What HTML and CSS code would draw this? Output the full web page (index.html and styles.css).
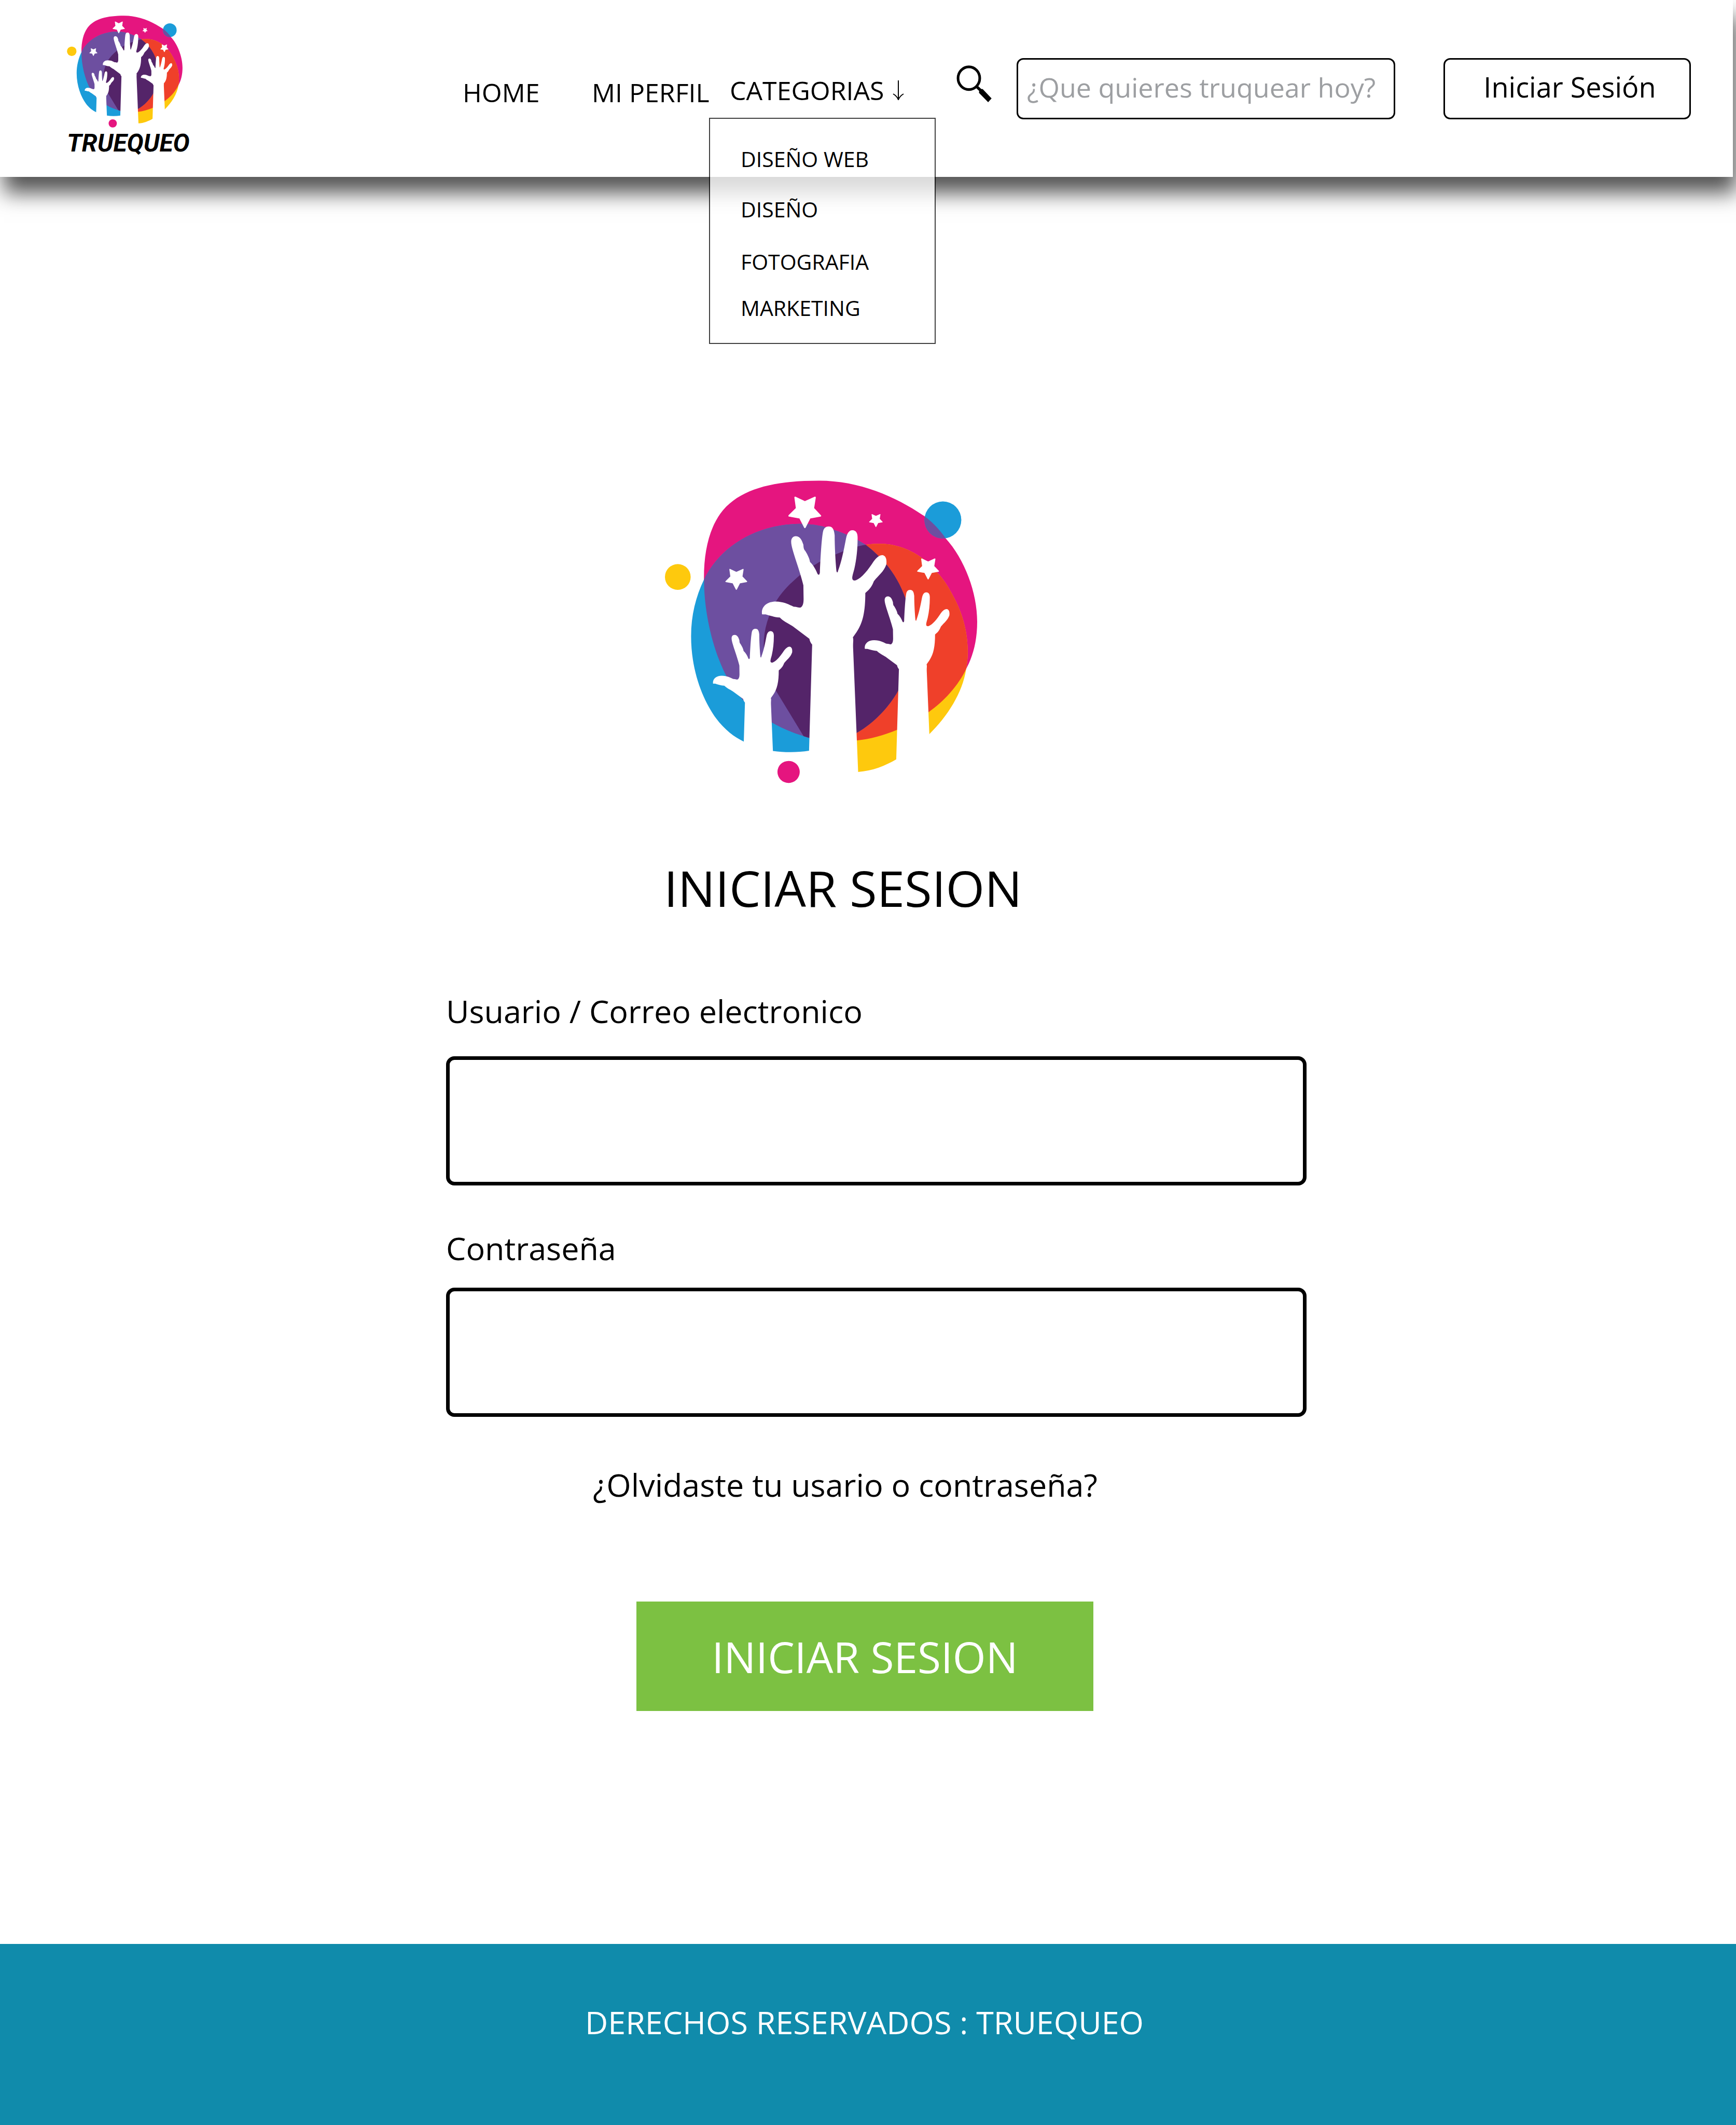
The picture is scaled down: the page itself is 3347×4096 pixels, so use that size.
FILE: index.html
```html
<!DOCTYPE html>
<html lang="es">
<head>
  <meta charset="utf-8">
  <meta name="viewport" content="width=device-width, initial-scale=1">
  <title>Truequeo - Iniciar sesion</title>
  <link rel="stylesheet" href="styles.css">
</head>
<body>
  <svg class="sprite" aria-hidden="true">
    <defs>
      <path id="blob-pink" d="M233 540C233 410 258 305 310 230C395 110 560 72 770 72C960 72 1130 150 1262 243C1300 272 1335 310 1360 348C1450 450 1508 610 1508 750C1508 840 1490 910 1460 970C1420 1060 1350 1135 1282 1184C1240 1220 1190 1248 1136 1269C1070 1297 1010 1314 946 1321C880 1330 790 1325 724 1308C665 1290 605 1268 550 1235C450 1180 385 1100 341 1018C280 900 233 720 233 540Z"/>
      <path id="blob-blue" d="M233 548C195 630 173 720 173 820C173 990 230 1130 290 1215C330 1270 375 1305 420 1327C460 1350 510 1366 554 1371C610 1379 670 1379 724 1370C800 1355 880 1325 946 1284C1030 1235 1100 1155 1140 1080C1180 1010 1200 900 1200 800C1200 740 1190 690 1174 640C1150 570 1120 520 1084 474C1060 445 1020 405 988 381C945 352 895 327 843 310C790 290 740 280 680 280C480 282 310 385 233 548Z"/>
      <path id="blob-yellow" d="M1060 376C1020 375 985 380 951 388C915 399 880 412 843 428C805 444 775 460 745 480C720 495 700 510 680 527C630 570 595 610 569 653C535 715 512 785 512 860C515 940 535 1020 568 1080L698 1300C760 1390 850 1470 952 1472C1020 1468 1080 1442 1130 1412C1190 1380 1240 1340 1285 1290C1370 1205 1440 1090 1456 980C1462 945 1464 920 1464 890C1463 780 1430 690 1395 625C1380 595 1355 550 1325 518C1300 485 1270 460 1245 440C1190 400 1120 376 1060 376Z"/>
      <path id="hand" d="M718 1560L738 860C730 850 727 843 725 832L655 778C640 765 605 750 587 730C560 728 540 720 525 716C518 713 510 716 504 714C499 680 525 653 568 653C610 654 630 668 652 678C665 677 676 684 684 682C695 676 698 660 698 640L697 575C690 545 675 495 662 455C650 415 640 385 640 365C640 350 648 339 662 339C684 340 691 362 697 380C698 400 700 402 706 410C718 430 726 448 728 463C745 480 755 500 762 518C766 527 772 527 774 514C776 460 781 360 788 320C791 302 800 292 815 292C832 292 840 304 843 335C843 390 847 460 851 505C853 516 857 516 859 505C875 460 885 410 896 350C901 325 910 310 926 310C944 311 951 325 950 350C950 400 945 450 935 495C930 515 925 530 925 540C925 550 932 554 942 551C970 540 1000 500 1025 460C1040 440 1052 430 1066 430C1082 433 1087 450 1084 475C1072 510 1050 525 1026 555C1016 580 1012 588 986 612C986 700 975 755 945 800L928 825C932 840 928 845 929 875L956 1560Z"/>
      <path id="star" d="M659 153L704 175L751 153L743 205L776 241L727 250L704 296L681 250L631 241L666 205Z"/>
      <clipPath id="in-pink"><use href="#blob-pink"/></clipPath>
      <clipPath id="in-blue"><use href="#blob-blue"/></clipPath>
    </defs>
    <symbol id="mark" viewBox="51 69 1457 1413">
      <g transform="scale(1 .9706)">
        <use href="#blob-pink" fill="#e5157f"/>
        <use href="#blob-yellow" fill="#fec90d"/>
        <use href="#blob-blue" fill="#1b9cd9"/>
        <g clip-path="url(#in-pink)">
          <use href="#blob-yellow" fill="#ef402a"/>
          <use href="#blob-blue" fill="#6d4fa0"/>
          <g clip-path="url(#in-blue)"><use href="#blob-yellow" fill="#542469"/></g>
        </g>
        <ellipse cx="1348" cy="261" rx="86" ry="89" fill="#1b9cd9"/>
        <g clip-path="url(#in-pink)"><ellipse cx="1348" cy="261" rx="86" ry="89" fill="#6d4fa0"/></g>
        <ellipse cx="111" cy="535" rx="60" ry="62" fill="#fec90d"/>
        <ellipse cx="628" cy="1472" rx="52" ry="53" fill="#e5157f"/>
        <g fill="#fff">
          <use href="#hand"/>
          <use href="#hand" transform="translate(641 401) scale(.68 .671)"/>
          <use href="#hand" transform="translate(-45 602) scale(.636 .624)"/>
        </g>
        <g fill="#fff" stroke="#fff" stroke-width="8" stroke-linejoin="round">
          <use href="#star"/>
          <use href="#star" transform="translate(-84 397) scale(.665)"/>
          <use href="#star" transform="translate(811 347) scale(.665)"/>
          <use href="#star" transform="translate(744 171) scale(.414)"/>
        </g>
      </g>
    </symbol>
  </svg>

  <header class="header">
    <a class="brand" href="#">
      <svg class="brand-mark" aria-hidden="true"><use href="#mark"/></svg>
      <span class="brand-name">TRUEQUEO</span>
    </a>
    <nav class="nav">
      <a class="nav-link" href="#">HOME</a>
      <a class="nav-link" href="#">MI PERFIL</a>
      <div class="nav-group">
        <button class="nav-toggle" type="button" aria-expanded="true">CATEGORIAS
          <svg class="arrow" viewBox="0 0 22 38" aria-hidden="true"><path d="M11 0V37M1 26Q8 30 11 37Q14 30 21 26"/></svg>
        </button>
        <ul class="menu">
          <li><a href="#">DISEÑO WEB</a></li>
          <li><a href="#">DISEÑO</a></li>
          <li><a href="#">FOTOGRAFIA</a></li>
          <li><a href="#">MARKETING</a></li>
        </ul>
      </div>
    </nav>
    <form class="search">
      <label for="buscar" aria-label="Buscar">
        <svg class="search-icon" viewBox="91 96 213 224" aria-hidden="true">
          <ellipse cx="166" cy="174" rx="66" ry="69" fill="none" stroke="#000" stroke-width="16"/>
          <path d="M209 233L221 221L242 240Q250 239 254 244L304 297L283 320L229 265Q226 259 229 252Z"/>
        </svg>
      </label>
      <input class="search-input" id="buscar" type="text" placeholder="¿Que quieres truquear hoy?">
    </form>
    <button class="login" type="button">Iniciar Sesión</button>
  </header>

  <main class="main">
    <form class="form">
      <svg class="form-mark" aria-hidden="true"><use href="#mark"/></svg>
      <h1 class="title">INICIAR SESION</h1>
      <label class="label label-user" for="usuario">Usuario / Correo electronico</label>
      <input class="field" id="usuario" type="text">
      <label class="label label-pass" for="clave">Contraseña</label>
      <input class="field" id="clave" type="password">
      <a class="forgot" href="#">¿Olvidaste tu usario o contraseña?</a>
      <button class="submit" type="submit">INICIAR SESION</button>
    </form>
  </main>

  <footer class="footer">DERECHOS RESERVADOS : TRUEQUEO</footer>
</body>
</html>
```
FILE: styles.css
```css
* {
  box-sizing: border-box;
}

body {
  margin: 0;
  min-height: 100vh;
  display: flex;
  flex-direction: column;
  overflow-x: hidden;
  background: #fff;
  color: #000;
  font-family: "Open Sans", "Noto Sans", sans-serif;
}

a {
  color: inherit;
  text-decoration: none;
}

button,
input {
  margin: 0;
  font-family: inherit;
  color: inherit;
}

.sprite {
  position: absolute;
  width: 0;
  height: 0;
}

/* Header */

.header {
  position: relative;
  z-index: 1;
  display: grid;
  grid-template-columns: 763px 952px 1fr 477px;
  align-items: start;
  margin-right: 6px;
  padding: 30px 81px 35px 129px;
  background: #fff;
  box-shadow: 7px 31px 38px rgba(0, 0, 0, .67);
}

.brand {
  display: flex;
  flex-direction: column;
  align-items: flex-start;
}

.brand-mark {
  width: 223px;
  height: 216px;
}

.brand-name {
  font: italic bold 48px/60px "Roboto", sans-serif;
}

.nav {
  display: grid;
  grid-template-columns: 249px 266px auto;
  align-items: start;
  padding-top: 114px;
  font-size: 50px;
  line-height: 60px;
  white-space: nowrap;
}

.nav-link {
  margin-top: 4px;
}

.nav-group {
  position: relative;
}

.nav-toggle {
  display: flex;
  align-items: center;
  gap: 16px;
  padding: 0;
  border: 0;
  background: none;
  font-size: 50px;
  line-height: 60px;
}

.arrow {
  width: 22px;
  height: 38px;
  fill: none;
  stroke: #000;
  stroke-width: 2;
}

.menu {
  position: absolute;
  top: 83px;
  left: -40px;
  display: grid;
  grid-template-rows: 97px 101px 89px 60px;
  width: 437px;
  margin: 0;
  padding: 47px 0 38px 59px;
  border: 2px solid rgba(0, 0, 0, .75);
  background: rgba(255, 255, 255, .78);
  background-clip: padding-box;
  list-style: none;
  font-size: 41px;
}

.search {
  display: flex;
  align-items: flex-start;
  gap: 48px;
  margin-right: 93px;
  padding-top: 82px;
}

.search-icon {
  display: block;
  width: 68px;
  height: 71px;
  margin-top: 14px;
}

.search-input,
.login {
  height: 118px;
  border: 3px solid #000;
  border-radius: 13px;
  background: #fff;
}

.search-input {
  flex: 1;
  min-width: 0;
  padding: 0 17px 8px;
  font-size: 52px;
}

.search-input::placeholder {
  color: #9d9fa2;
  opacity: 1;
}

.login {
  margin-top: 82px;
  padding: 0 0 8px 10px;
  font-size: 54px;
}

/* Login form */

.main {
  flex: 1;
  padding: 585px 0 160px 32px;
}

.form {
  display: flex;
  flex-direction: column;
  align-items: flex-start;
  max-width: 1659px;
  margin: 0 auto;
}

.form-mark {
  width: 602px;
  height: 584px;
  margin-left: 422px;
}

.title {
  margin: 141px 0 0 420px;
  font-size: 96px;
  font-weight: 400;
  line-height: 120px;
}

.label,
.forgot {
  font-size: 61px;
  line-height: 80px;
}

.label-user {
  margin: 138px 0 47px;
}

.label-pass {
  margin: 81px 0 36px;
}

.field {
  width: 100%;
  height: 249px;
  padding: 0 40px;
  border: 7px solid #000;
  border-radius: 16px;
  background: #fff;
  font-size: 61px;
}

.forgot {
  margin: 91px 0 185px 283px;
}

.submit {
  width: 881px;
  height: 211px;
  margin-left: 367px;
  padding: 0;
  border: 0;
  background: #7cc142;
  color: #fff;
  font-size: 82px;
}

/* Footer */

.footer {
  padding: 111px 14px 158px 0;
  background: #108bab;
  color: #fff;
  font-size: 61px;
  line-height: 80px;
  text-align: center;
}
```
